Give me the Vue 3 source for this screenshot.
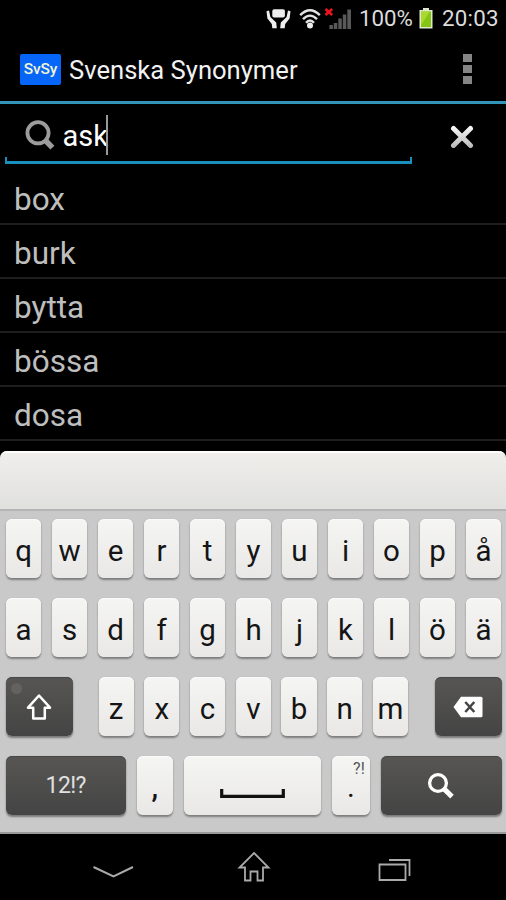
<script setup>
const words = ['box', 'burk', 'bytta', 'bössa', 'dosa']
const rowOne = [...'qwertyuiopå']
const rowTwo = [...'asdfghjklöä']
const rowThree = [...'zxcvbnm']
</script>

<template>
  <div class="phone">
    <div class="status">
      <svg class="s-hands" width="25" height="22" viewBox="0 0 25 22" fill="#eee">
        <rect x="6.3" y="1.2" width="12.6" height="8.3" rx="1.8" />
        <path d="M.5 3.2L3 2.4 4.4 9l5.8 5.4.6 5.8H6.3l-.5-4.2L1.4 10.6zM24.5 3.2L22 2.4 20.6 9l-5.8 5.4-.6 5.8h4.5l.5-4.2 4.4-5.4z" />
      </svg>
      <svg class="s-wifi" width="22" height="22" viewBox="0 0 22 22" fill="none" stroke="#e4e4e4" stroke-width="2.4">
        <path d="M1.2 7.2Q11-2.8 20.8 7.2M4 11.2Q11 4 18 11.2M7 14.8Q11 10.2 15 14.8" />
        <circle cx="11" cy="17.6" r="3" fill="#eee" stroke="none" />
      </svg>
      <svg class="s-signal" width="28" height="22" viewBox="0 0 28 22">
        <path d="M4.4 17h3.5v4H4.400zM8.800 15h3.500v6H8.800zM13.300 10.500h3.500V21h-3.500zM17.800 6.500h3.500V21h-3.500zM22.300 1.500h3.700V21h-3.700z" fill="#595959" />
        <path d="M.4 1l6.800 6M7.200 1L.4 7" stroke="#e8131b" stroke-width="2.8" />
      </svg>
      <span class="pct">100%</span>
      <svg class="s-batt" width="14" height="21" viewBox="0 0 14 21">
        <path d="M4 0h6v2h3.500v18.500H.5V2H4z" fill="#dfe8cf" />
        <rect x="2" y="3.500" width="10" height="15.500" fill="#86c414" />
        <path d="M2 3.500h9L2 17z" fill="#a9d92e" />
      </svg>
      <span class="clock">20:03</span>
    </div>

    <header class="bar">
      <div class="logo">SvSy</div>
      <h1>Svenska Synonymer</h1>
      <div class="more"><i></i><i></i><i></i></div>
    </header>

    <div class="search">
      <div class="field">
        <svg width="31" height="32" viewBox="0 0 31 32" fill="none" stroke="#9c9c9c">
          <circle cx="13" cy="12.800" r="10.600" stroke-width="3.800" />
          <path d="M19.800 19.800l7.600 7.800" stroke-width="5.600" />
        </svg>
        <span class="query">ask</span><span class="caret"></span>
      </div>
      <svg class="clear" width="24" height="24" viewBox="0 0 24 24">
        <defs>
          <linearGradient id="cg" gradientUnits="userSpaceOnUse" x1="0" y1="0" x2="0" y2="24">
            <stop offset="0" stop-color="#fff" /><stop offset="1" stop-color="#b5b5b5" />
          </linearGradient>
        </defs>
        <path d="M3.500 3.400l17 17M20.500 3.400l-17 17" stroke="url(#cg)" stroke-width="5" stroke-linecap="round" />
      </svg>
    </div>

    <ul class="list">
      <li v-for="w in words" :key="w">{{ w }}</li>
    </ul>

    <div class="keyboard">
      <div class="suggest"></div>
      <div class="keys">
        <div class="row eleven">
          <div v-for="k in rowOne" :key="k" class="key">{{ k }}</div>
        </div>
        <div class="row eleven">
          <div v-for="k in rowTwo" :key="k" class="key">{{ k }}</div>
        </div>
        <div class="row third">
          <div class="key dark shift">
            <svg width="28" height="28" viewBox="0 0 28 28">
              <path d="M14 2.500L25 14.700h-5.200v10.800H8.200V14.700H3z" fill="none" stroke="#fff" stroke-width="2.500" stroke-linejoin="round" />
            </svg>
          </div>
          <div class="letters">
            <div v-for="k in rowThree" :key="k" class="key">{{ k }}</div>
          </div>
          <div class="key dark">
            <svg width="30" height="22" viewBox="0 0 30 22">
              <path d="M.5 11L8 .8h20q1.500 0 1.500 1.500v17.400q0 1.500-1.500 1.500H8z" fill="#fff" />
              <path d="M12.300 6l9 10M21.300 6l-9 10" stroke="#444" stroke-width="2.500" />
            </svg>
          </div>
        </div>
        <div class="row fourth">
          <div class="key dark num">12!?</div>
          <div class="key comma">,</div>
          <div class="key space">
            <svg width="66" height="10" viewBox="0 0 66 10"><path d="M1.700 0v7.300h61.600V0" fill="none" stroke="#111" stroke-width="3.200" /></svg>
          </div>
          <div class="key dot">.<span class="alt">?!</span></div>
          <div class="key dark find">
            <svg width="28" height="28" viewBox="0 0 28 28" fill="none" stroke="#fff">
              <circle cx="11" cy="11" r="8.400" stroke-width="3.300" />
              <path d="M16.800 16.600l8.200 8" stroke-width="5" />
            </svg>
          </div>
        </div>
      </div>
    </div>

    <nav class="nav">
      <svg class="n-down" width="42" height="14" viewBox="0 0 42 14"><path d="M1.500 2l20 9.500L41 2" fill="none" stroke="#aaa" stroke-width="2" /></svg>
      <svg class="n-home" width="34" height="32" viewBox="0 0 34 32"><path d="M17 2L31.500 16.500h-5.500v13h-5.500V20.500h-7v9H8v-13H2.500z" fill="none" stroke="#aaa" stroke-width="1.800" /></svg>
      <svg class="n-apps" width="34" height="24" viewBox="0 0 34 24" fill="none" stroke="#aaa" stroke-width="1.800"><path d="M1.500 6.500h26v15.500h-26zM11 2h20.500v16" /></svg>
    </nav>
  </div>
</template>

<style>
body { background: #000; }
</style>

<style scoped>
.phone {
  width: 506px; height: 900px; overflow: hidden; background: #000;
  font-family: Roboto, sans-serif; color: #fff;
  display: flex; flex-direction: column;
}
.phone * { box-sizing: border-box; }
svg { display: block; flex: none; }
.status { height: 37px; flex: none; display: flex; align-items: center; padding-left: 266px; color: #dcdcdc; font-size: 22.3px; line-height: 39px; }
.s-wifi { margin-left: 8px; }
.s-signal { margin-left: 4px; }
.pct { margin-left: 6px; width: 53px; white-space: nowrap; }
.s-batt { margin-left: 7px; }
.clock { margin-left: 9px; letter-spacing: .25px; }
.bar { height: 67px; flex: none; display: flex; align-items: center; padding: 0 34px 0 20px; border-bottom: 3px solid #3295b8; }
.logo { width: 41px; height: 31px; border-radius: 2px; background: #0666fa; color: #f4f5d0; font-size: 15.5px; font-weight: 500; line-height: 31px; letter-spacing: -.2px; text-align: center; }
h1 { margin: 1px 0 0 8px; font-size: 25.6px; line-height: 30px; font-weight: 400; color: #f2f2f2; flex: 1; white-space: nowrap; }
.more { display: flex; flex-direction: column; gap: 2.6px; }
.more i { width: 9px; height: 8px; background: #858585; }
.search { height: 66.5px; flex: none; display: flex; padding-left: 5px; }
.field { position: relative; width: 407px; height: 60px; padding: 0 0 0 18px; border-bottom: 3px solid #1b8fbc; display: flex; align-items: flex-start; }
.field::before, .field::after { content: ''; position: absolute; bottom: 0; width: 2px; height: 4px; background: #1b8fbc; }
.field::before { left: 0; }
.field::after { right: 0; }
.field svg { margin: 16px 0 0 2px; }
.query { margin: 14px 0 0 6.5px; font-size: 29px; line-height: 36px; }
.caret { width: 2px; height: 40px; margin: 11px 0 0 -1.5px; background: #999; }
.clear { margin: 21px 0 0 38px; }
.list { list-style: none; margin: 0; padding: 0; flex: none; height: 280.5px; color: #bebebe; font-size: 31.5px; }
.list li { height: 54.1px; padding: 2px 0 0 14px; line-height: 53px; border-bottom: 2px solid #1e1e1e; }
.keyboard { height: 383px; flex: none; border-radius: 7px 7px 0 0; overflow: hidden; background: #c9c9c9; border-bottom: 2px solid #999; }
.suggest { height: 60px; background: linear-gradient(#efeeeb, #e0e0de); border-top: 2px solid #fff; border-bottom: 2px solid #b5b5b5; }
.keys { padding: 8px 4.5px 0 6px; display: flex; flex-direction: column; gap: 20px; }
.row { display: grid; height: 59px; }
.eleven { grid-template-columns: repeat(11, 35.2px); column-gap: 10.8px; }
.third { grid-template-columns: 66.5px 310px 67px; justify-content: space-between; }
.letters { display: grid; grid-template-columns: repeat(7, 35.2px); column-gap: 10.55px; }
.fourth { grid-template-columns: 119.5px 36px 137px 37.5px 120.5px; justify-content: space-between; }
.key {
  position: relative; display: flex; align-items: center; justify-content: center;
  height: 59px; padding-top: 5px; border-radius: 6px;
  background: linear-gradient(#f5f5f4, #e9e8e6);
  box-shadow: 0 1.5px 2px rgba(0, 0, 0, .38), inset 0 1px 0 #fafafa;
  color: #151515; font-size: 29.5px; line-height: 54px;
}
.third .key { padding-top: 4px; }
.dark { background: linear-gradient(#575654, #444); color: #e0e0e0; box-shadow: 0 1.5px 2px rgba(0, 0, 0, .4), inset 0 1px 0 #474747; }
.shift::before { content: ''; position: absolute; left: 5px; top: 6px; width: 11px; height: 11px; border-radius: 50%; background: #636261; }
.third .dark { padding-top: 0; }
.num { font-size: 23px; letter-spacing: -.6px; padding-top: 0; }
.comma { padding-top: 2px; font-weight: 500; }
.space { align-items: flex-start; padding-top: 33px; }
.dot { padding-top: 2px; }
.alt { position: absolute; right: 5px; top: 4px; font-size: 16px; line-height: 17px; color: #555; }
.find { padding-top: 0; }
.nav { height: 66px; flex: none; display: flex; align-items: center; padding-left: 92px; }
.n-down { margin-top: 9px; }
.n-home { margin-left: 103px; margin-top: 0; }
.n-apps { margin-left: 106.5px; margin-top: 6px; }
</style>
